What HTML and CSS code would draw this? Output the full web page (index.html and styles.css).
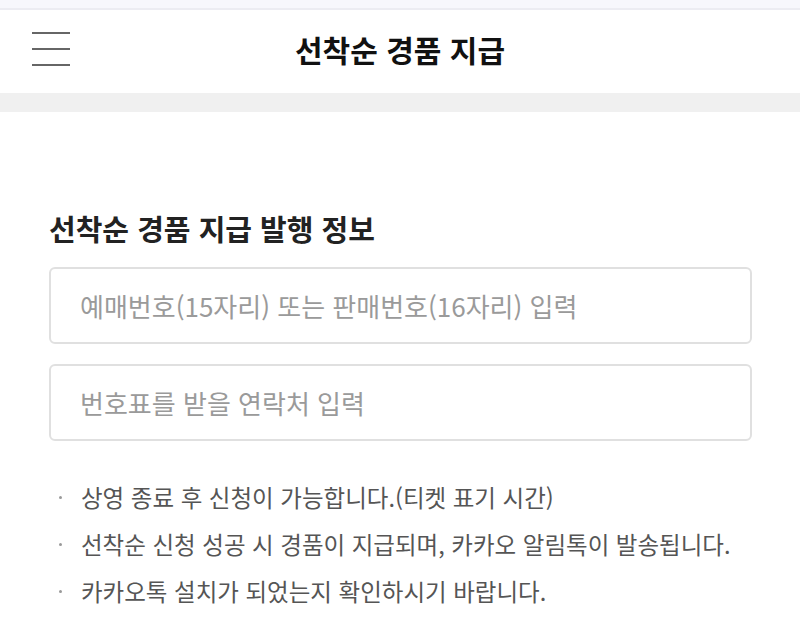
FILE: index.html
```html
<!DOCTYPE html>
<html lang="ko">
<head>
    <meta charset="UTF-8">
    <meta name="viewport" content="width=device-width, initial-scale=1.0">
    <title>선착순 경품 지급</title>
    <link rel="stylesheet" href="styles.css">
</head>
<body>

    <!-- Status strip -->
    <div class="top-strip"></div>

    <!-- Header -->
    <header class="header">
        <button class="menu-btn" aria-label="메뉴">
            <span></span>
            <span></span>
            <span></span>
        </button>
        <h1 class="header-title">선착순 경품 지급</h1>
    </header>

    <div class="divider"></div>

    <!-- Main Content -->
    <main class="content">
        <h2 class="section-title">선착순 경품 지급 발행 정보</h2>

        <input class="field" type="text" placeholder="예매번호(15자리) 또는 판매번호(16자리) 입력">
        <input class="field" type="tel" placeholder="번호표를 받을 연락처 입력">

        <ul class="notice">
            <li>상영 종료 후 신청이 가능합니다.(티켓 표기 시간)</li>
            <li>선착순 신청 성공 시 경품이 지급되며, 카카오 알림톡이 발송됩니다.</li>
            <li>카카오톡 설치가 되었는지 확인하시기 바랍니다.</li>
        </ul>
    </main>

</body>
</html>
```

FILE: styles.css
```css
/* Body */
body {
    margin: 0;
    padding: 0;
    background: #fff;
    font-family: "Noto Sans CJK KR", "Noto Sans", sans-serif;
    color: #222;
    overflow: hidden;
}

/* Top strip */
.top-strip {
    height: 8px;
    background: #f7f7fc;
    border-bottom: 2px solid #ececf2;
}

/* Header */
.header {
    position: relative;
    height: 83px;
    display: flex;
    align-items: center;
    justify-content: center;
}

.header-title {
    margin: -6px 0 0;
    font-size: 30px;
    font-weight: 700;
    color: #111;
    letter-spacing: 0;
}

.menu-btn {
    position: absolute;
    left: 32px;
    top: 22px;
    width: 38px;
    height: 34px;
    padding: 0;
    border: 0;
    background: none;
    display: flex;
    flex-direction: column;
    justify-content: space-between;
    cursor: pointer;
}

.menu-btn span {
    display: block;
    height: 2px;
    background: #666;
}

.divider {
    height: 19px;
    background: #f0f0f0;
}

/* Main content */
.content {
    padding: 96px 48px 0 49px;
}

.section-title {
    margin: 0 0 19px;
    font-size: 29px;
    font-weight: 700;
    color: #222;
    line-height: 40px;
}

.field {
    display: block;
    box-sizing: border-box;
    width: 100%;
    height: 77px;
    margin-bottom: 20px;
    padding: 0 29px;
    border: 2px solid #e0e0e0;
    border-radius: 6px;
    font-family: inherit;
    font-size: 26px;
    color: #222;
    outline: none;
}

.field::placeholder {
    color: #9a9a9a;
}

/* Notices */
.notice {
    list-style: none;
    margin: 33px 0 0;
    padding: 0;
}

.notice li {
    position: relative;
    padding-left: 32px;
    font-size: 23.5px;
    line-height: 47px;
    color: #555;
}

.notice li::before {
    content: "";
    position: absolute;
    left: 10px;
    top: 22px;
    width: 3px;
    height: 3px;
    border-radius: 50%;
    background: #999;
}
```
